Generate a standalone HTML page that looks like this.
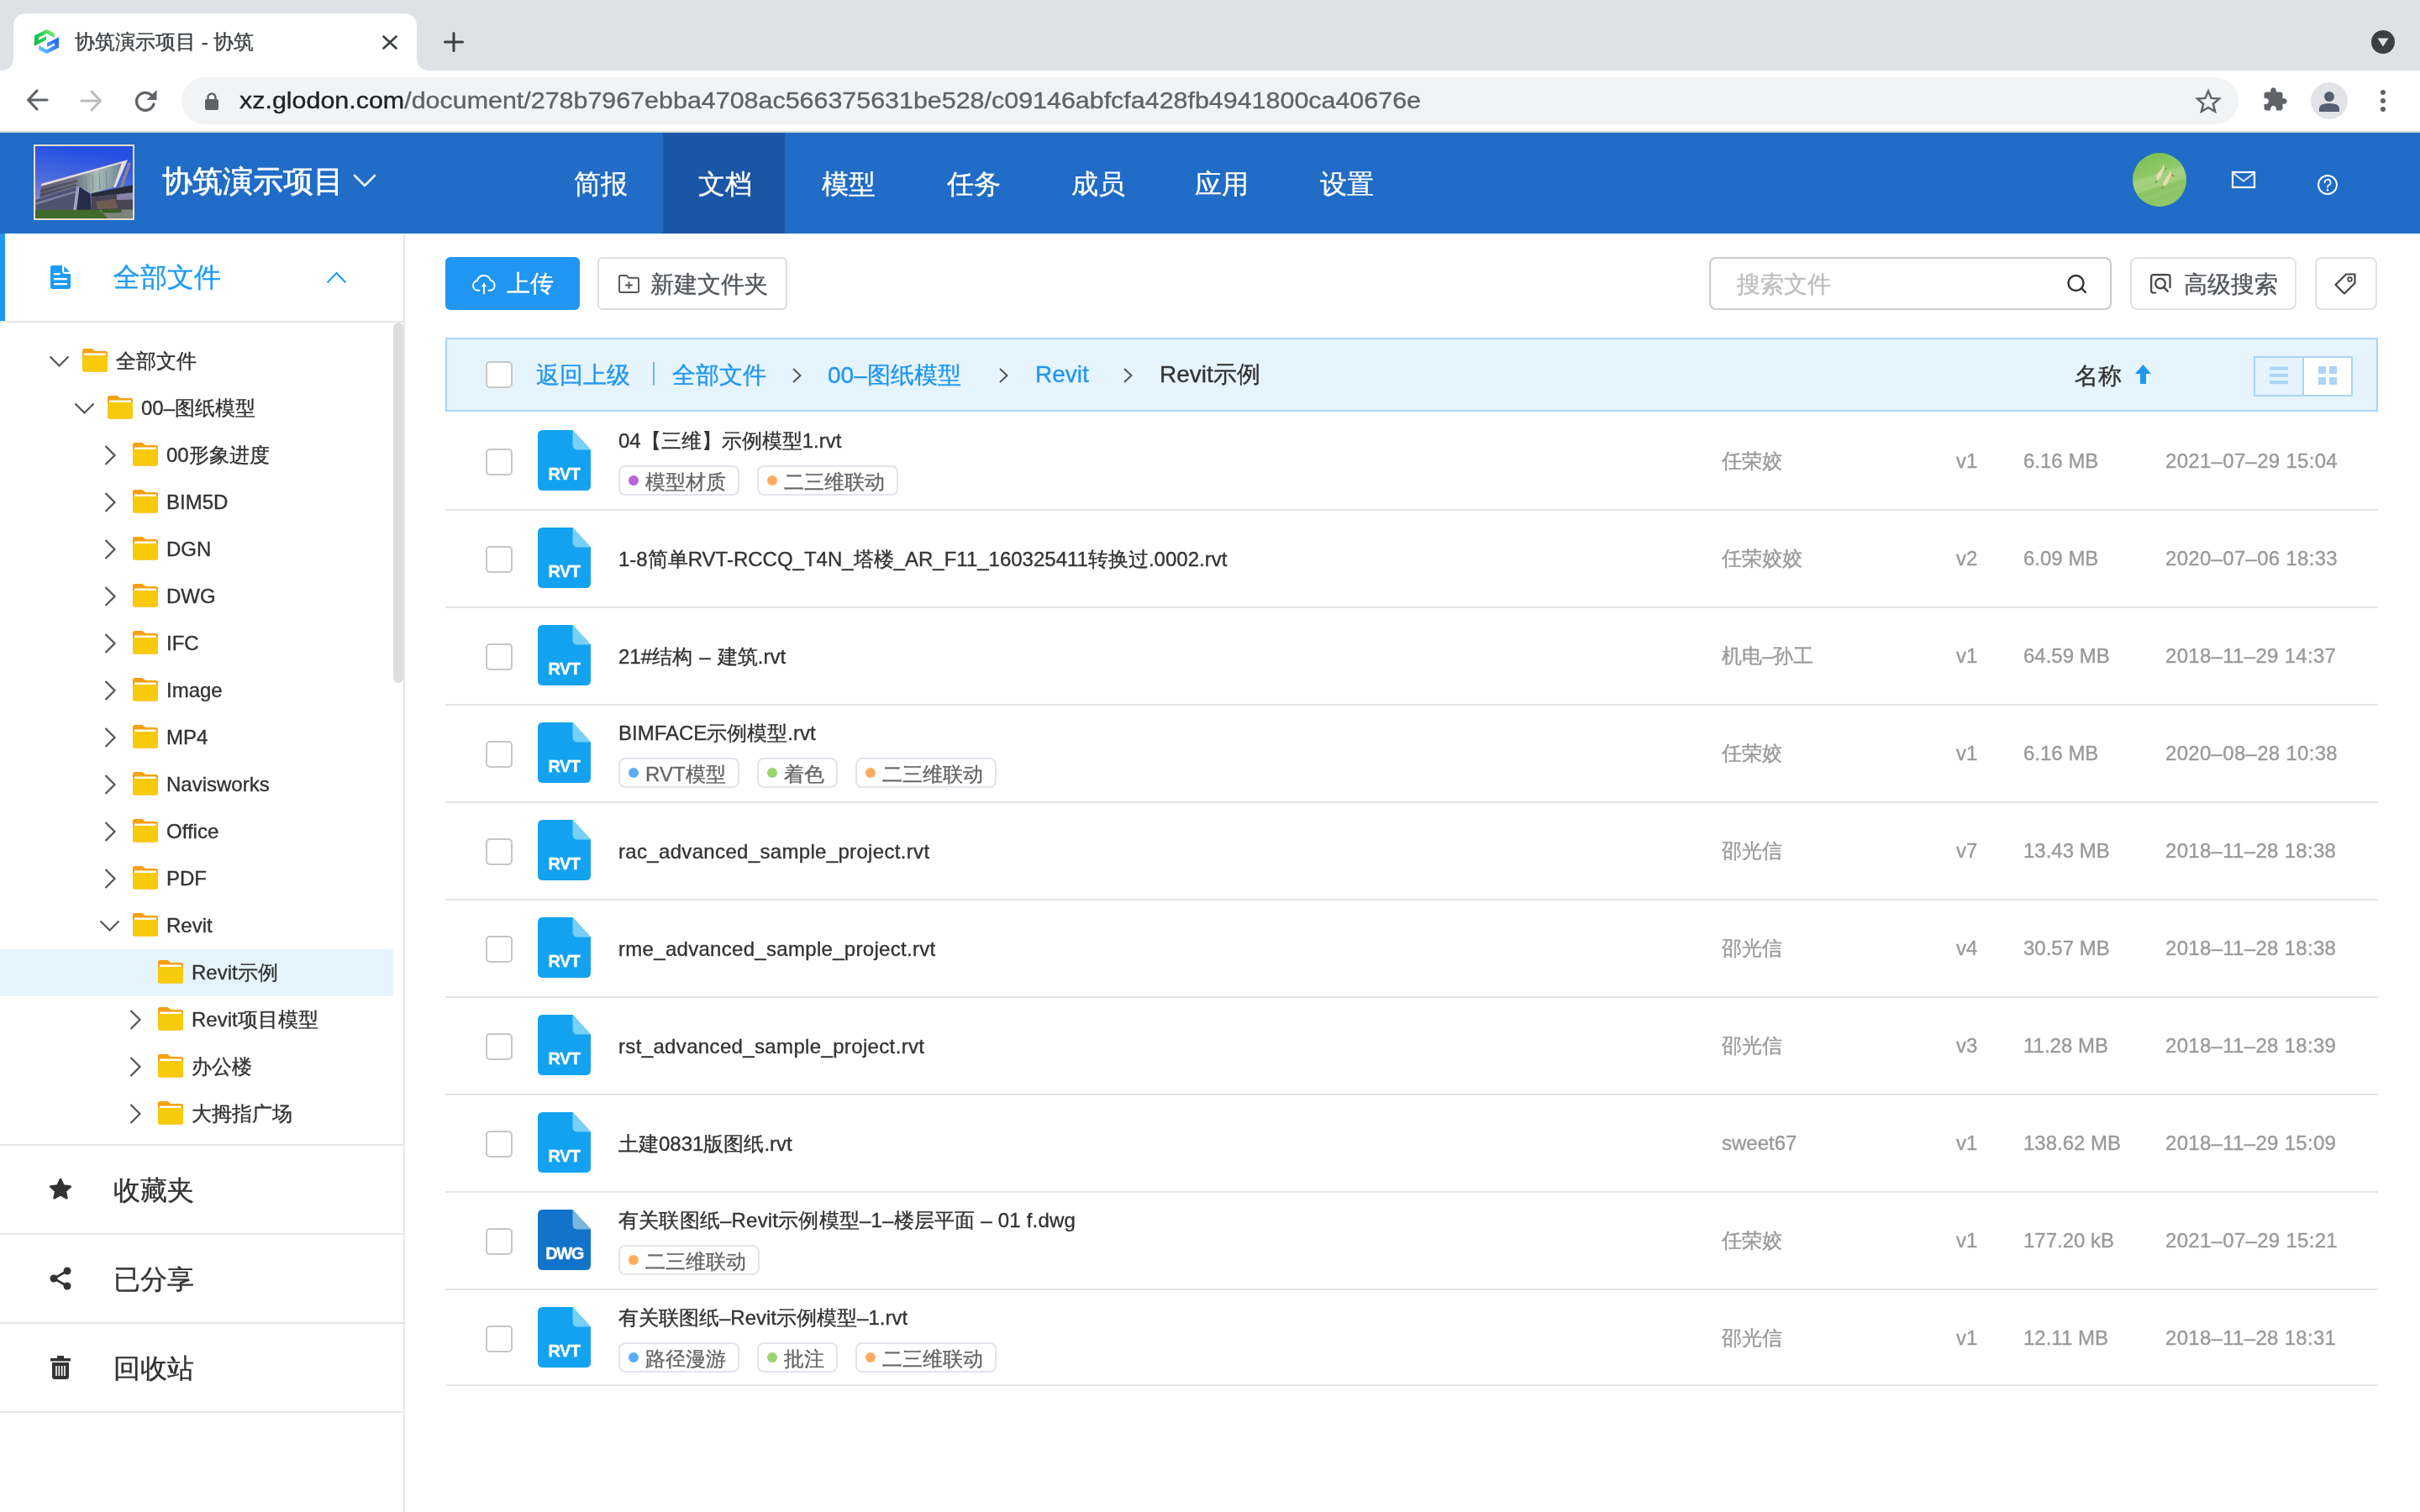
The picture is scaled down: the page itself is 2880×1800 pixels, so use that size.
<!DOCTYPE html>
<html><head><meta charset="utf-8"><style>
*{box-sizing:border-box;margin:0;padding:0}
html,body{width:2880px;height:1800px;overflow:hidden;background:#fff;font-family:"Liberation Sans",sans-serif}
.a{position:absolute}
.t{position:absolute;white-space:nowrap;line-height:1;-webkit-text-stroke:0.35px currentColor}
body{will-change:transform}
svg{position:absolute;overflow:visible}
</style></head><body>
<div class="a" style="left:0;top:0;width:2880px;height:84px;background:#dee1e6"></div>
<svg style="left:0;top:0" width="520" height="84"><path d="M0 84 Q16 84 16 68 L16 32 Q16 16 32 16 L480 16 Q496 16 496 32 L496 68 Q496 84 512 84 Z" fill="#fff"/></svg>
<svg style="left:36px;top:30px" width="40" height="40" viewBox="0 0 40 40">
<defs><linearGradient id="fg" x1="0" y1="1" x2="1" y2="0"><stop offset="0" stop-color="#10b43c"/><stop offset="0.55" stop-color="#22d35a"/><stop offset="1" stop-color="#9ef07a"/></linearGradient>
<linearGradient id="fb" x1="0" y1="1" x2="1" y2="0"><stop offset="0" stop-color="#86d4ff"/><stop offset="0.5" stop-color="#3a8cf7"/><stop offset="1" stop-color="#1d5bff"/></linearGradient></defs>
<path d="M5 24.8 L5 12.3 L19.5 5 L28.8 9.6 L28.8 14.8 L19.5 10.1 L10 14.8 L10 17.8 L19 13.3 L19 17.5 Z" fill="url(#fg)"/>
<path d="M34 14.2 L34 26.7 L19.5 34 L10.2 29.4 L10.2 24.2 L19.5 28.9 L29 24.2 L29 21.2 L20 25.7 L20 21.5 Z" fill="url(#fb)"/>
</svg>
<div class="t" style="left:89px;top:38px;font-size:24px;color:#3c4043;font-weight:400;">协筑演示项目 - 协筑</div>
<svg style="left:455px;top:42px" width="18" height="17"><path d="M1.5 1.5 L16.5 15.5 M16.5 1.5 L1.5 15.5" stroke="#3c4043" stroke-width="2.6" stroke-linecap="round"/></svg>
<svg style="left:528px;top:38px" width="24" height="24"><path d="M12 1.5 V22.5 M1.5 12 H22.5" stroke="#3c4043" stroke-width="3" stroke-linecap="round"/></svg>
<div class="a" style="left:2822px;top:36px;width:28px;height:28px;border-radius:14px;background:#3c4043"></div>
<svg style="left:2829px;top:45px" width="14" height="11"><path d="M0.5 0.5 L13.5 0.5 L7 10.5 Z" fill="#dee1e6"/></svg>
<div class="a" style="left:0;top:84px;width:2880px;height:72px;background:#fff"></div>
<div class="a" style="left:0;top:156px;width:2880px;height:2px;background:#d5d7da"></div>
<svg style="left:31px;top:106px" width="27" height="26"><path d="M25 13 H3 M13 2 L2.5 13 L13 24" stroke="#5f6368" stroke-width="3.2" fill="none" stroke-linecap="round" stroke-linejoin="round"/></svg>
<svg style="left:95px;top:107px" width="27" height="26"><path d="M2 13 H24 M14 2 L24.5 13 L14 24" stroke="#babcbe" stroke-width="3.2" fill="none" stroke-linecap="round" stroke-linejoin="round"/></svg>
<svg style="left:159px;top:107px" width="28" height="27"><path d="M24 17 A10.5 10.5 0 1 1 21 6" stroke="#5f6368" stroke-width="3.2" fill="none" stroke-linecap="round"/><path d="M27.5 0 V12 H15.5 Z" fill="#5f6368"/></svg>
<div class="a" style="left:216px;top:92px;width:2448px;height:56px;background:#f1f3f4;border-radius:28px"></div>
<svg style="left:244px;top:110px" width="16" height="21"><path d="M3.5 9 V6 A4.5 4.5 0 0 1 12.5 6 V9" stroke="#5f6368" stroke-width="2.4" fill="none"/><rect x="0" y="8" width="16" height="13" rx="2" fill="#5f6368"/></svg>
<div class="t" style="left:285px;top:106px;font-size:28px;color:#5f6368;font-weight:400;transform:scaleX(1.0867);transform-origin:0 0"><span style="color:#202124">xz.glodon.com</span>/document/278b7967ebba4708ac566375631be528/c09146abfcfa428fb4941800ca40676e</div>
<svg style="left:2613px;top:106px" width="30" height="29" viewBox="0 0 24 23"><path d="M12 1.8 L14.9 8.6 L22.3 9.2 L16.7 14.1 L18.4 21.3 L12 17.5 L5.6 21.3 L7.3 14.1 L1.7 9.2 L9.1 8.6 Z" stroke="#5f6368" stroke-width="2" fill="none" stroke-linejoin="miter"/></svg>
<svg style="left:2692px;top:103px" width="31" height="31" viewBox="0 0 24 24"><path d="M20.5 11H19V7c0-1.1-.9-2-2-2h-4V3.5C13 2.12 11.88 1 10.5 1S8 2.12 8 3.5V5H4c-1.1 0-1.99.9-1.99 2v3.8H3.5c1.49 0 2.7 1.21 2.7 2.7s-1.21 2.7-2.7 2.7H2V20c0 1.1.9 2 2 2h3.8v-1.5c0-1.49 1.21-2.7 2.7-2.7 1.49 0 2.7 1.21 2.7 2.7V22H17c1.1 0 2-.9 2-2v-4h1.5c1.38 0 2.5-1.12 2.5-2.5S21.88 11 20.5 11z" fill="#5f6368"/></svg>
<div class="a" style="left:2750px;top:98px;width:44px;height:44px;border-radius:22px;background:#e1e3e7"></div>
<svg style="left:2760px;top:108px" width="24" height="25"><circle cx="12" cy="7" r="6" fill="#54606f"/><path d="M0 25 V21 Q0 15 12 15 Q24 15 24 21 V25 Z" fill="#54606f"/></svg>
<div class="a" style="left:2833px;top:107px;width:6px;height:6px;border-radius:3px;background:#5f6368"></div>
<div class="a" style="left:2833px;top:117px;width:6px;height:6px;border-radius:3px;background:#5f6368"></div>
<div class="a" style="left:2833px;top:127px;width:6px;height:6px;border-radius:3px;background:#5f6368"></div>
<div class="a" style="left:0;top:158px;width:2880px;height:120px;background:#206cc6"></div>
<div class="a" style="left:789px;top:158px;width:145px;height:120px;background:#1b56a6"></div>
<div class="a" style="left:40px;top:172px;width:120px;height:90px;border:2px solid #e3ddd2;overflow:hidden;background:#2b52de">
<svg style="left:0;top:0" width="116" height="86" viewBox="0 0 116 86">
<defs><linearGradient id="sky" x1="0.2" y1="0" x2="0" y2="1"><stop offset="0" stop-color="#2650e2"/><stop offset="0.45" stop-color="#4c6cdc"/><stop offset="0.75" stop-color="#8a86cc"/><stop offset="1" stop-color="#9a8ec4"/></linearGradient>
<linearGradient id="glass" x1="0" y1="0" x2="1" y2="0"><stop offset="0" stop-color="#5e5a6e"/><stop offset="0.45" stop-color="#6f7a88"/><stop offset="0.7" stop-color="#a9bbb8"/><stop offset="0.85" stop-color="#8fa3a8"/><stop offset="1" stop-color="#6d8290"/></linearGradient></defs>
<rect width="116" height="86" fill="url(#sky)"/>
<path d="M110.4 19.8 L114 19.8 L104 50.5 L100 50.5 Z" fill="#8d8290"/>
<path d="M7.9 47 L102.5 20.5 L93.2 49 L65.4 56.8 L48.9 48.2 L5.2 62 Z" fill="url(#glass)"/>
<path d="M6 52 L50 40 L50 42.5 L6 55Z M5.5 57 L49 45 L49 47 L5.5 59.5Z" fill="#4a4658" opacity="0.8"/>
<path d="M60 36 L61 52 M68 34 L69 53 M76 31.5 L77 52 M84 29 L85 51" stroke="#5f6f7c" stroke-width="0.8" opacity="0.7"/>
<path d="M6.6 44.9 L110.1 16.2 L95.8 49 L93 49 L102.5 20.5 L7.9 47.6 Z" fill="#e6ddd8"/>
<path d="M0.6 64 L48.9 48.2 L45.6 76.7 L0.6 76 Z" fill="#4e5470"/>
<path d="M0.6 67 L48 53 L48 55.5 L0.6 70Z" fill="#8c92b4" opacity="0.7"/>
<path d="M52.2 48.2 L65.4 56.8 L66.8 76 L46.9 76.7 Z" fill="#262c48"/>
<path d="M49 48.2 L52.6 48.2 L49 76.7 L45.2 76.7 Z" fill="#a0a6c0"/>
<path d="M66.8 56.2 L116 46.2 L116 54.8 L66.8 60.8 Z" fill="#252b38"/>
<path d="M66.8 60.8 L116 54.8 L116 76 L66.8 76 Z" fill="#4b4656"/>
<path d="M97 57.5 L116 55.5 L116 63.5 L97 64 Z" fill="#9a90c0" opacity="0.8"/>
<path d="M72 66 L95 63 L98 74 L74 75 Z" fill="#8c7250" opacity="0.55"/>
<path d="M0 76 L116 75.5 L116 86 L0 86 Z" fill="#3f6a2c"/>
<path d="M76.7 76 L116 75.5 L116 86 L86 86 Z" fill="#7d847a"/>
<path d="M78.7 75.3 L102.5 75.3 L102.5 79.3 L80 79.3 Z" fill="#3a5a28"/>
</svg></div>
<div class="t" style="left:193px;top:198px;font-size:36px;color:#fff;font-weight:400;-webkit-text-stroke:0.7px #fff">协筑演示项目</div>
<svg style="left:420px;top:207px" width="28" height="16"><path d="M2 2 L14 14 L26 2" stroke="#eef4fb" stroke-width="2.6" fill="none" stroke-linecap="round" stroke-linejoin="round"/></svg>
<div class="t" style="left:683px;top:203px;font-size:32px;color:#fff;font-weight:400;">简报</div>
<div class="t" style="left:831px;top:203px;font-size:32px;color:#fff;font-weight:400;">文档</div>
<div class="t" style="left:978px;top:203px;font-size:32px;color:#fff;font-weight:400;">模型</div>
<div class="t" style="left:1127px;top:203px;font-size:32px;color:#fff;font-weight:400;">任务</div>
<div class="t" style="left:1275px;top:203px;font-size:32px;color:#fff;font-weight:400;">成员</div>
<div class="t" style="left:1422px;top:203px;font-size:32px;color:#fff;font-weight:400;">应用</div>
<div class="t" style="left:1571px;top:203px;font-size:32px;color:#fff;font-weight:400;">设置</div>
<div class="a" style="left:2538px;top:182px;width:64px;height:64px;border-radius:32px;overflow:hidden;background:linear-gradient(160deg,#78bb4e 0%,#8cc866 35%,#a3d07c 55%,#8cc466 75%,#9ccc74 100%)">
<svg style="left:0;top:0" width="64" height="64"><path d="M0 34 L64 14 L64 22 L0 44Z" fill="#a9d685" opacity=".5"/><path d="M0 50 L64 30 L64 36 L0 58Z" fill="#7fbf58" opacity=".5"/>
<path d="M28 27 L35 18 L37 13 L38 18 L33 30 L29 33 Z" fill="#e6ddb0"/><path d="M36 35 L43 25 L45 20 L46 26 L41 37 L37 40 Z" fill="#e6ddb0"/>
<path d="M29 33 L27 36 M37 40 L35 43 M38 18 L40 19 M46 26 L50 28" stroke="#8a7a4a" stroke-width="1.2"/></svg></div>
<svg style="left:2656px;top:204px" width="28" height="20"><rect x="1" y="1" width="26" height="18" fill="none" stroke="#fff" stroke-width="2.2"/><path d="M2 2.5 L14 11.5 L26 2.5" stroke="#dfe9f7" stroke-width="1.8" fill="none"/></svg>
<svg style="left:2758px;top:208px" width="24" height="24"><circle cx="12" cy="12" r="11" stroke="#fff" stroke-width="1.9" fill="none"/><path d="M8.6 9.3 A3.5 3.5 0 1 1 13 12.6 Q12 13.3 12 15" stroke="#fff" stroke-width="1.7" fill="none" stroke-linecap="round"/><circle cx="12" cy="18.2" r="1.2" fill="#fff"/></svg>
<div class="a" style="left:480px;top:278px;width:2px;height:1522px;background:#e6e7ec"></div>
<div class="a" style="left:0;top:278px;width:6px;height:105px;background:#2196f3"></div>
<div class="a" style="left:0;top:382px;width:481px;height:2px;background:#e6e6ea"></div>
<svg style="left:60px;top:316px" width="24" height="28" viewBox="0 0 24 28"><path d="M2.5 0 H14 V6.5 Q14 10 17.5 10 H24 V25.5 Q24 28 21.5 28 H2.5 Q0 28 0 25.5 V2.5 Q0 0 2.5 0 Z" fill="#1c9bfa"/><path d="M16.2 1 L23 7.8 H16.2 Z" fill="#1c9bfa"/><path d="M4 10.2 H11.7 M4 16.1 H19.9 M4 22.1 H19.9" stroke="#fff" stroke-width="2.2"/></svg>
<div class="t" style="left:135px;top:314px;font-size:32px;color:#1c9bfa;font-weight:400;">全部文件</div>
<svg style="left:388px;top:323px" width="25" height="15"><path d="M1.5 13.5 L12.5 2 L23.5 13.5" stroke="#1c9bfa" stroke-width="2" fill="none"/></svg>
<svg style="left:58px;top:423px" width="25" height="14"><path d="M1.5 1.5 L12.5 12.5 L23.5 1.5" stroke="#555" stroke-width="2.2" fill="none"/></svg>
<svg style="left:98px;top:415px" width="30" height="28" viewBox="0 0 30 28"><path d="M0 2.5 Q0 0 2.5 0 H11.5 L15 3 H27.5 Q30 3 30 5.5 V25 Q30 27.5 27.5 27.5 H2.5 Q0 27.5 0 25 Z" fill="#f6a00f"/><rect x="2" y="5.5" width="26" height="2.5" fill="#fff"/><path d="M0 8 H30 V25 Q30 27.5 27.5 27.5 H2.5 Q0 27.5 0 25 Z" fill="#f8ca0c"/></svg>
<div class="t" style="left:138px;top:418px;font-size:24px;color:#333;font-weight:400;">全部文件</div>
<svg style="left:88px;top:479px" width="25" height="14"><path d="M1.5 1.5 L12.5 12.5 L23.5 1.5" stroke="#555" stroke-width="2.2" fill="none"/></svg>
<svg style="left:128px;top:471px" width="30" height="28" viewBox="0 0 30 28"><path d="M0 2.5 Q0 0 2.5 0 H11.5 L15 3 H27.5 Q30 3 30 5.5 V25 Q30 27.5 27.5 27.5 H2.5 Q0 27.5 0 25 Z" fill="#f6a00f"/><rect x="2" y="5.5" width="26" height="2.5" fill="#fff"/><path d="M0 8 H30 V25 Q30 27.5 27.5 27.5 H2.5 Q0 27.5 0 25 Z" fill="#f8ca0c"/></svg>
<div class="t" style="left:168px;top:474px;font-size:24px;color:#333;font-weight:400;">00–图纸模型</div>
<svg style="left:124px;top:530px" width="14" height="24"><path d="M1.5 1 L12.5 12 L1.5 23" stroke="#555" stroke-width="2.2" fill="none"/></svg>
<svg style="left:158px;top:527px" width="30" height="28" viewBox="0 0 30 28"><path d="M0 2.5 Q0 0 2.5 0 H11.5 L15 3 H27.5 Q30 3 30 5.5 V25 Q30 27.5 27.5 27.5 H2.5 Q0 27.5 0 25 Z" fill="#f6a00f"/><rect x="2" y="5.5" width="26" height="2.5" fill="#fff"/><path d="M0 8 H30 V25 Q30 27.5 27.5 27.5 H2.5 Q0 27.5 0 25 Z" fill="#f8ca0c"/></svg>
<div class="t" style="left:198px;top:530px;font-size:24px;color:#333;font-weight:400;">00形象进度</div>
<svg style="left:124px;top:586px" width="14" height="24"><path d="M1.5 1 L12.5 12 L1.5 23" stroke="#555" stroke-width="2.2" fill="none"/></svg>
<svg style="left:158px;top:583px" width="30" height="28" viewBox="0 0 30 28"><path d="M0 2.5 Q0 0 2.5 0 H11.5 L15 3 H27.5 Q30 3 30 5.5 V25 Q30 27.5 27.5 27.5 H2.5 Q0 27.5 0 25 Z" fill="#f6a00f"/><rect x="2" y="5.5" width="26" height="2.5" fill="#fff"/><path d="M0 8 H30 V25 Q30 27.5 27.5 27.5 H2.5 Q0 27.5 0 25 Z" fill="#f8ca0c"/></svg>
<div class="t" style="left:198px;top:586px;font-size:24px;color:#333;font-weight:400;">BIM5D</div>
<svg style="left:124px;top:642px" width="14" height="24"><path d="M1.5 1 L12.5 12 L1.5 23" stroke="#555" stroke-width="2.2" fill="none"/></svg>
<svg style="left:158px;top:639px" width="30" height="28" viewBox="0 0 30 28"><path d="M0 2.5 Q0 0 2.5 0 H11.5 L15 3 H27.5 Q30 3 30 5.5 V25 Q30 27.5 27.5 27.5 H2.5 Q0 27.5 0 25 Z" fill="#f6a00f"/><rect x="2" y="5.5" width="26" height="2.5" fill="#fff"/><path d="M0 8 H30 V25 Q30 27.5 27.5 27.5 H2.5 Q0 27.5 0 25 Z" fill="#f8ca0c"/></svg>
<div class="t" style="left:198px;top:642px;font-size:24px;color:#333;font-weight:400;">DGN</div>
<svg style="left:124px;top:698px" width="14" height="24"><path d="M1.5 1 L12.5 12 L1.5 23" stroke="#555" stroke-width="2.2" fill="none"/></svg>
<svg style="left:158px;top:695px" width="30" height="28" viewBox="0 0 30 28"><path d="M0 2.5 Q0 0 2.5 0 H11.5 L15 3 H27.5 Q30 3 30 5.5 V25 Q30 27.5 27.5 27.5 H2.5 Q0 27.5 0 25 Z" fill="#f6a00f"/><rect x="2" y="5.5" width="26" height="2.5" fill="#fff"/><path d="M0 8 H30 V25 Q30 27.5 27.5 27.5 H2.5 Q0 27.5 0 25 Z" fill="#f8ca0c"/></svg>
<div class="t" style="left:198px;top:698px;font-size:24px;color:#333;font-weight:400;">DWG</div>
<svg style="left:124px;top:754px" width="14" height="24"><path d="M1.5 1 L12.5 12 L1.5 23" stroke="#555" stroke-width="2.2" fill="none"/></svg>
<svg style="left:158px;top:751px" width="30" height="28" viewBox="0 0 30 28"><path d="M0 2.5 Q0 0 2.5 0 H11.5 L15 3 H27.5 Q30 3 30 5.5 V25 Q30 27.5 27.5 27.5 H2.5 Q0 27.5 0 25 Z" fill="#f6a00f"/><rect x="2" y="5.5" width="26" height="2.5" fill="#fff"/><path d="M0 8 H30 V25 Q30 27.5 27.5 27.5 H2.5 Q0 27.5 0 25 Z" fill="#f8ca0c"/></svg>
<div class="t" style="left:198px;top:754px;font-size:24px;color:#333;font-weight:400;">IFC</div>
<svg style="left:124px;top:810px" width="14" height="24"><path d="M1.5 1 L12.5 12 L1.5 23" stroke="#555" stroke-width="2.2" fill="none"/></svg>
<svg style="left:158px;top:807px" width="30" height="28" viewBox="0 0 30 28"><path d="M0 2.5 Q0 0 2.5 0 H11.5 L15 3 H27.5 Q30 3 30 5.5 V25 Q30 27.5 27.5 27.5 H2.5 Q0 27.5 0 25 Z" fill="#f6a00f"/><rect x="2" y="5.5" width="26" height="2.5" fill="#fff"/><path d="M0 8 H30 V25 Q30 27.5 27.5 27.5 H2.5 Q0 27.5 0 25 Z" fill="#f8ca0c"/></svg>
<div class="t" style="left:198px;top:810px;font-size:24px;color:#333;font-weight:400;">Image</div>
<svg style="left:124px;top:866px" width="14" height="24"><path d="M1.5 1 L12.5 12 L1.5 23" stroke="#555" stroke-width="2.2" fill="none"/></svg>
<svg style="left:158px;top:863px" width="30" height="28" viewBox="0 0 30 28"><path d="M0 2.5 Q0 0 2.5 0 H11.5 L15 3 H27.5 Q30 3 30 5.5 V25 Q30 27.5 27.5 27.5 H2.5 Q0 27.5 0 25 Z" fill="#f6a00f"/><rect x="2" y="5.5" width="26" height="2.5" fill="#fff"/><path d="M0 8 H30 V25 Q30 27.5 27.5 27.5 H2.5 Q0 27.5 0 25 Z" fill="#f8ca0c"/></svg>
<div class="t" style="left:198px;top:866px;font-size:24px;color:#333;font-weight:400;">MP4</div>
<svg style="left:124px;top:922px" width="14" height="24"><path d="M1.5 1 L12.5 12 L1.5 23" stroke="#555" stroke-width="2.2" fill="none"/></svg>
<svg style="left:158px;top:919px" width="30" height="28" viewBox="0 0 30 28"><path d="M0 2.5 Q0 0 2.5 0 H11.5 L15 3 H27.5 Q30 3 30 5.5 V25 Q30 27.5 27.5 27.5 H2.5 Q0 27.5 0 25 Z" fill="#f6a00f"/><rect x="2" y="5.5" width="26" height="2.5" fill="#fff"/><path d="M0 8 H30 V25 Q30 27.5 27.5 27.5 H2.5 Q0 27.5 0 25 Z" fill="#f8ca0c"/></svg>
<div class="t" style="left:198px;top:922px;font-size:24px;color:#333;font-weight:400;">Navisworks</div>
<svg style="left:124px;top:978px" width="14" height="24"><path d="M1.5 1 L12.5 12 L1.5 23" stroke="#555" stroke-width="2.2" fill="none"/></svg>
<svg style="left:158px;top:975px" width="30" height="28" viewBox="0 0 30 28"><path d="M0 2.5 Q0 0 2.5 0 H11.5 L15 3 H27.5 Q30 3 30 5.5 V25 Q30 27.5 27.5 27.5 H2.5 Q0 27.5 0 25 Z" fill="#f6a00f"/><rect x="2" y="5.5" width="26" height="2.5" fill="#fff"/><path d="M0 8 H30 V25 Q30 27.5 27.5 27.5 H2.5 Q0 27.5 0 25 Z" fill="#f8ca0c"/></svg>
<div class="t" style="left:198px;top:978px;font-size:24px;color:#333;font-weight:400;">Office</div>
<svg style="left:124px;top:1034px" width="14" height="24"><path d="M1.5 1 L12.5 12 L1.5 23" stroke="#555" stroke-width="2.2" fill="none"/></svg>
<svg style="left:158px;top:1031px" width="30" height="28" viewBox="0 0 30 28"><path d="M0 2.5 Q0 0 2.5 0 H11.5 L15 3 H27.5 Q30 3 30 5.5 V25 Q30 27.5 27.5 27.5 H2.5 Q0 27.5 0 25 Z" fill="#f6a00f"/><rect x="2" y="5.5" width="26" height="2.5" fill="#fff"/><path d="M0 8 H30 V25 Q30 27.5 27.5 27.5 H2.5 Q0 27.5 0 25 Z" fill="#f8ca0c"/></svg>
<div class="t" style="left:198px;top:1034px;font-size:24px;color:#333;font-weight:400;">PDF</div>
<svg style="left:118px;top:1095px" width="25" height="14"><path d="M1.5 1.5 L12.5 12.5 L23.5 1.5" stroke="#555" stroke-width="2.2" fill="none"/></svg>
<svg style="left:158px;top:1087px" width="30" height="28" viewBox="0 0 30 28"><path d="M0 2.5 Q0 0 2.5 0 H11.5 L15 3 H27.5 Q30 3 30 5.5 V25 Q30 27.5 27.5 27.5 H2.5 Q0 27.5 0 25 Z" fill="#f6a00f"/><rect x="2" y="5.5" width="26" height="2.5" fill="#fff"/><path d="M0 8 H30 V25 Q30 27.5 27.5 27.5 H2.5 Q0 27.5 0 25 Z" fill="#f8ca0c"/></svg>
<div class="t" style="left:198px;top:1090px;font-size:24px;color:#333;font-weight:400;">Revit</div>
<div class="a" style="left:0;top:1130px;width:468px;height:56px;background:#e6f4fe"></div>
<svg style="left:188px;top:1143px" width="30" height="28" viewBox="0 0 30 28"><path d="M0 2.5 Q0 0 2.5 0 H11.5 L15 3 H27.5 Q30 3 30 5.5 V25 Q30 27.5 27.5 27.5 H2.5 Q0 27.5 0 25 Z" fill="#f6a00f"/><rect x="2" y="5.5" width="26" height="2.5" fill="#fff"/><path d="M0 8 H30 V25 Q30 27.5 27.5 27.5 H2.5 Q0 27.5 0 25 Z" fill="#f8ca0c"/></svg>
<div class="t" style="left:228px;top:1146px;font-size:24px;color:#333;font-weight:400;">Revit示例</div>
<svg style="left:154px;top:1202px" width="14" height="24"><path d="M1.5 1 L12.5 12 L1.5 23" stroke="#555" stroke-width="2.2" fill="none"/></svg>
<svg style="left:188px;top:1199px" width="30" height="28" viewBox="0 0 30 28"><path d="M0 2.5 Q0 0 2.5 0 H11.5 L15 3 H27.5 Q30 3 30 5.5 V25 Q30 27.5 27.5 27.5 H2.5 Q0 27.5 0 25 Z" fill="#f6a00f"/><rect x="2" y="5.5" width="26" height="2.5" fill="#fff"/><path d="M0 8 H30 V25 Q30 27.5 27.5 27.5 H2.5 Q0 27.5 0 25 Z" fill="#f8ca0c"/></svg>
<div class="t" style="left:228px;top:1202px;font-size:24px;color:#333;font-weight:400;">Revit项目模型</div>
<svg style="left:154px;top:1258px" width="14" height="24"><path d="M1.5 1 L12.5 12 L1.5 23" stroke="#555" stroke-width="2.2" fill="none"/></svg>
<svg style="left:188px;top:1255px" width="30" height="28" viewBox="0 0 30 28"><path d="M0 2.5 Q0 0 2.5 0 H11.5 L15 3 H27.5 Q30 3 30 5.5 V25 Q30 27.5 27.5 27.5 H2.5 Q0 27.5 0 25 Z" fill="#f6a00f"/><rect x="2" y="5.5" width="26" height="2.5" fill="#fff"/><path d="M0 8 H30 V25 Q30 27.5 27.5 27.5 H2.5 Q0 27.5 0 25 Z" fill="#f8ca0c"/></svg>
<div class="t" style="left:228px;top:1258px;font-size:24px;color:#333;font-weight:400;">办公楼</div>
<svg style="left:154px;top:1314px" width="14" height="24"><path d="M1.5 1 L12.5 12 L1.5 23" stroke="#555" stroke-width="2.2" fill="none"/></svg>
<svg style="left:188px;top:1311px" width="30" height="28" viewBox="0 0 30 28"><path d="M0 2.5 Q0 0 2.5 0 H11.5 L15 3 H27.5 Q30 3 30 5.5 V25 Q30 27.5 27.5 27.5 H2.5 Q0 27.5 0 25 Z" fill="#f6a00f"/><rect x="2" y="5.5" width="26" height="2.5" fill="#fff"/><path d="M0 8 H30 V25 Q30 27.5 27.5 27.5 H2.5 Q0 27.5 0 25 Z" fill="#f8ca0c"/></svg>
<div class="t" style="left:228px;top:1314px;font-size:24px;color:#333;font-weight:400;">大拇指广场</div>
<div class="a" style="left:468px;top:384px;width:12px;height:429px;border-radius:6px;background:#dedede"></div>
<div class="a" style="left:0;top:1362px;width:481px;height:2px;background:#e6e6ea"></div>
<div class="t" style="left:135px;top:1401px;font-size:32px;color:#333;font-weight:400;">收藏夹</div>
<div class="a" style="left:0;top:1468px;width:481px;height:2px;background:#e6e6ea"></div>
<div class="t" style="left:135px;top:1507px;font-size:32px;color:#333;font-weight:400;">已分享</div>
<div class="a" style="left:0;top:1574px;width:481px;height:2px;background:#e6e6ea"></div>
<div class="t" style="left:135px;top:1613px;font-size:32px;color:#333;font-weight:400;">回收站</div>
<div class="a" style="left:0;top:1680px;width:481px;height:2px;background:#e6e6ea"></div>
<svg style="left:58px;top:1402px" width="28" height="27" viewBox="0 0 28 27"><path d="M14 2 L17.6 9.6 L25.8 10.5 L19.7 16.1 L21.4 24.3 L14 20.1 L6.6 24.3 L8.3 16.1 L2.2 10.5 L10.4 9.6 Z" fill="#333" stroke="#333" stroke-width="2.6" stroke-linejoin="round"/></svg>
<svg style="left:58px;top:1508px" width="28" height="28" viewBox="0 0 28 28"><circle cx="22" cy="5" r="4.5" fill="#333"/><circle cx="6" cy="14" r="4.5" fill="#333"/><circle cx="22" cy="23" r="4.5" fill="#333"/><path d="M22 5 L6 14 L22 23" stroke="#333" stroke-width="2.6" fill="none"/></svg>
<svg style="left:60px;top:1614px" width="24" height="28" viewBox="0 0 24 28"><path d="M8 0 H16 V3 H24 V6.5 H0 V3 H8 Z" fill="#333"/><path d="M2 8 H22 V25 Q22 28 19 28 H5 Q2 28 2 25 Z" fill="#333"/><path d="M7 12 V24 M10.3 12 V24 M13.7 12 V24 M17 12 V24" stroke="#fff" stroke-width="1.6"/></svg>
<div class="a" style="left:530px;top:306px;width:160px;height:63px;border-radius:6px;background:#2196f3"></div>
<svg style="left:561px;top:325px" width="30" height="26" viewBox="0 0 30 26"><path d="M9.5 20.8 H7.5 A5.8 5.8 0 0 1 6.8 9.3 A8.3 8.3 0 0 1 22.7 8.6 A6.3 6.3 0 0 1 23 20.8 H20.5" stroke="#fff" stroke-width="1.9" fill="none" stroke-linecap="round"/><path d="M15 24.5 V12.8" stroke="#fff" stroke-width="1.9" stroke-linecap="round"/><path d="M11.8 16.2 L15 12.2 L18.2 16.2 Z" fill="#fff"/></svg>
<div class="t" style="left:603px;top:324px;font-size:28px;color:#fff;font-weight:400;">上传</div>
<div class="a" style="left:711px;top:306px;width:226px;height:63px;border-radius:6px;border:2px solid #dcdde3;background:#fff"></div>
<svg style="left:736px;top:327px" width="25" height="22" viewBox="0 0 25 22"><path d="M1 2.8 Q1 1 2.8 1 H9.6 L12.3 3.8 H22.2 Q24 3.8 24 5.6 V19.2 Q24 21 22.2 21 H2.8 Q1 21 1 19.2 Z" stroke="#555" stroke-width="1.9" fill="none"/><path d="M12.5 8.2 V16.8 M8.2 12.5 H16.8" stroke="#555" stroke-width="1.9"/></svg>
<div class="t" style="left:774px;top:325px;font-size:28px;color:#53575d;font-weight:400;">新建文件夹</div>
<div class="a" style="left:2034px;top:306px;width:479px;height:63px;border-radius:8px;border:2px solid #cbcbcb;background:#fff"></div>
<div class="t" style="left:2067px;top:325px;font-size:28px;color:#bdbdbd;font-weight:400;">搜索文件</div>
<svg style="left:2460px;top:327px" width="24" height="22" viewBox="0 0 24 22"><circle cx="10.5" cy="10" r="9" stroke="#333" stroke-width="2.4" fill="none"/><path d="M17.5 16.5 L22 21" stroke="#333" stroke-width="2.4" stroke-linecap="round"/></svg>
<div class="a" style="left:2535px;top:306px;width:198px;height:63px;border-radius:8px;border:2px solid #dfe1ea;background:#fff"></div>
<svg style="left:2559px;top:326px" width="25" height="24" viewBox="0 0 25 24"><path d="M7 22.5 H3.5 Q1.2 22.5 1.2 20.2 V3.5 Q1.2 1.2 3.5 1.2 H21 Q23.5 1.2 23.5 3.5 V17" stroke="#444" stroke-width="2.2" fill="none"/><circle cx="12" cy="11.5" r="5.8" stroke="#444" stroke-width="2.2" fill="none"/><path d="M16 15.8 L21.5 21.5" stroke="#444" stroke-width="2.4"/></svg>
<div class="t" style="left:2599px;top:325px;font-size:28px;color:#53575d;font-weight:400;">高级搜索</div>
<div class="a" style="left:2755px;top:306px;width:74px;height:63px;border-radius:8px;border:2px solid #dfe1ea;background:#fff"></div>
<svg style="left:2778px;top:325px" width="26" height="26" viewBox="0 0 26 26"><path d="M14 1.5 H24.5 V12 L12 24.5 L1.5 14 Z" stroke="#444" stroke-width="2.2" fill="none" stroke-linejoin="round"/><circle cx="18.5" cy="7.5" r="2.4" stroke="#444" stroke-width="1.8" fill="none"/></svg>
<div class="a" style="left:530px;top:402px;width:2300px;height:88px;border:2px solid #a8d4fb;background:#e6f4fe"></div>
<div class="a" style="left:578px;top:430px;width:32px;height:32px;border:2px solid #c6c6c6;border-radius:5px;background:#fff"></div>
<div class="t" style="left:638px;top:433px;font-size:28px;color:#2196f3;font-weight:400;">返回上级</div>
<div class="a" style="left:777px;top:431px;width:2px;height:28px;background:#6ab8f5"></div>
<div class="t" style="left:800px;top:433px;font-size:28px;color:#2196f3;font-weight:400;">全部文件</div>
<svg style="left:943px;top:438px" width="11" height="18"><path d="M1 1 L9.5 9 L1 17" stroke="#555" stroke-width="2" fill="none"/></svg>
<div class="t" style="left:985px;top:433px;font-size:28px;color:#2196f3;font-weight:400;">00–图纸模型</div>
<svg style="left:1189px;top:438px" width="11" height="18"><path d="M1 1 L9.5 9 L1 17" stroke="#555" stroke-width="2" fill="none"/></svg>
<div class="t" style="left:1232px;top:432px;font-size:28px;color:#2196f3;font-weight:400;">Revit</div>
<svg style="left:1337px;top:438px" width="11" height="18"><path d="M1 1 L9.5 9 L1 17" stroke="#555" stroke-width="2" fill="none"/></svg>
<div class="t" style="left:1380px;top:432px;font-size:28px;color:#333;font-weight:400;">Revit示例</div>
<div class="t" style="left:2469px;top:434px;font-size:28px;color:#333;font-weight:400;">名称</div>
<svg style="left:2541px;top:434px" width="19" height="23" viewBox="0 0 19 23"><path d="M9.5 0 L19 11 H13 V23 H6 V11 H0 Z" fill="#2196f3"/></svg>
<div class="a" style="left:2682px;top:424px;width:118px;height:48px;border:2px solid #a8d4fb;background:#e6f4fe"></div>
<div class="a" style="left:2740px;top:424px;width:60px;height:48px;border:2px solid #a8d4fb;background:#fff"></div>
<svg style="left:2701px;top:436px" width="22" height="22"><path d="M0 2.5 H22 M0 10.8 H22 M0 19.2 H22" stroke="#acd4fa" stroke-width="4"/></svg>
<svg style="left:2759px;top:436px" width="22" height="22"><rect x="0" y="0" width="9" height="9" fill="#acd4fa"/><rect x="13" y="0" width="9" height="9" fill="#acd4fa"/><rect x="0" y="13" width="9" height="9" fill="#acd4fa"/><rect x="13" y="13" width="9" height="9" fill="#acd4fa"/></svg>
<div class="a" style="left:578px;top:534px;width:32px;height:32px;border:2px solid #c6c6c6;border-radius:5px;background:#fff"></div>
<svg style="left:640px;top:512px" width="63" height="72" viewBox="0 0 63 72"><path d="M6 0 H41.5 L63 23.5 V66 Q63 72 57 72 H6 Q0 72 0 66 V6 Q0 0 6 0 Z" fill="#12a2f0"/><path d="M41.5 0 L63 23.5 H47.5 Q41.5 23.5 41.5 17.5 Z" fill="#76d0f7"/></svg>
<div class="t" style="left:640px;top:554px;width:63px;text-align:center;font-size:20px;font-weight:700;color:#fff;letter-spacing:-0.6px">RVT</div>
<div class="t" style="left:736px;top:513px;font-size:24px;color:#333;font-weight:400;">04【三维】示例模型1.rvt</div>
<div class="a" style="left:736px;top:554px;display:flex;gap:21px"><div style="position:relative;height:36px;padding:0 14px 0 30px;border:2px solid #e1e4ec;border-radius:8px;background:#fff;font-size:24px;line-height:36px;color:#666;white-space:nowrap;-webkit-text-stroke:0.35px currentColor"><span style="position:absolute;left:10px;top:10px;width:12px;height:12px;border-radius:6px;background:#b865d6"></span>模型材质</div><div style="position:relative;height:36px;padding:0 14px 0 30px;border:2px solid #e1e4ec;border-radius:8px;background:#fff;font-size:24px;line-height:36px;color:#666;white-space:nowrap;-webkit-text-stroke:0.35px currentColor"><span style="position:absolute;left:10px;top:10px;width:12px;height:12px;border-radius:6px;background:#fdab5f"></span>二三维联动</div></div>
<div class="t" style="left:2049px;top:537px;font-size:24px;color:#999;font-weight:400;">任荣姣</div>
<div class="t" style="left:2328px;top:537px;font-size:24px;color:#999;font-weight:400;">v1</div>
<div class="t" style="left:2408px;top:537px;font-size:24px;color:#999;font-weight:400;">6.16 MB</div>
<div class="t" style="left:2577px;top:537px;font-size:24px;color:#999;font-weight:400;letter-spacing:0.3px">2021–07–29 15:04</div>
<div class="a" style="left:530px;top:606px;width:2300px;height:2px;background:#e3e5ea"></div>
<div class="a" style="left:578px;top:650px;width:32px;height:32px;border:2px solid #c6c6c6;border-radius:5px;background:#fff"></div>
<svg style="left:640px;top:628px" width="63" height="72" viewBox="0 0 63 72"><path d="M6 0 H41.5 L63 23.5 V66 Q63 72 57 72 H6 Q0 72 0 66 V6 Q0 0 6 0 Z" fill="#12a2f0"/><path d="M41.5 0 L63 23.5 H47.5 Q41.5 23.5 41.5 17.5 Z" fill="#76d0f7"/></svg>
<div class="t" style="left:640px;top:670px;width:63px;text-align:center;font-size:20px;font-weight:700;color:#fff;letter-spacing:-0.6px">RVT</div>
<div class="t" style="left:736px;top:654px;font-size:24px;color:#333;font-weight:400;">1-8简单RVT-RCCQ_T4N_塔楼_AR_F11_160325411转换过.0002.rvt</div>
<div class="t" style="left:2049px;top:653px;font-size:24px;color:#999;font-weight:400;">任荣姣姣</div>
<div class="t" style="left:2328px;top:653px;font-size:24px;color:#999;font-weight:400;">v2</div>
<div class="t" style="left:2408px;top:653px;font-size:24px;color:#999;font-weight:400;">6.09 MB</div>
<div class="t" style="left:2577px;top:653px;font-size:24px;color:#999;font-weight:400;letter-spacing:0.3px">2020–07–06 18:33</div>
<div class="a" style="left:530px;top:722px;width:2300px;height:2px;background:#e3e5ea"></div>
<div class="a" style="left:578px;top:766px;width:32px;height:32px;border:2px solid #c6c6c6;border-radius:5px;background:#fff"></div>
<svg style="left:640px;top:744px" width="63" height="72" viewBox="0 0 63 72"><path d="M6 0 H41.5 L63 23.5 V66 Q63 72 57 72 H6 Q0 72 0 66 V6 Q0 0 6 0 Z" fill="#12a2f0"/><path d="M41.5 0 L63 23.5 H47.5 Q41.5 23.5 41.5 17.5 Z" fill="#76d0f7"/></svg>
<div class="t" style="left:640px;top:786px;width:63px;text-align:center;font-size:20px;font-weight:700;color:#fff;letter-spacing:-0.6px">RVT</div>
<div class="t" style="left:736px;top:770px;font-size:24px;color:#333;font-weight:400;word-spacing:1.5px">21#结构 – 建筑.rvt</div>
<div class="t" style="left:2049px;top:769px;font-size:24px;color:#999;font-weight:400;">机电–孙工</div>
<div class="t" style="left:2328px;top:769px;font-size:24px;color:#999;font-weight:400;">v1</div>
<div class="t" style="left:2408px;top:769px;font-size:24px;color:#999;font-weight:400;">64.59 MB</div>
<div class="t" style="left:2577px;top:769px;font-size:24px;color:#999;font-weight:400;letter-spacing:0.3px">2018–11–29 14:37</div>
<div class="a" style="left:530px;top:838px;width:2300px;height:2px;background:#e3e5ea"></div>
<div class="a" style="left:578px;top:882px;width:32px;height:32px;border:2px solid #c6c6c6;border-radius:5px;background:#fff"></div>
<svg style="left:640px;top:860px" width="63" height="72" viewBox="0 0 63 72"><path d="M6 0 H41.5 L63 23.5 V66 Q63 72 57 72 H6 Q0 72 0 66 V6 Q0 0 6 0 Z" fill="#12a2f0"/><path d="M41.5 0 L63 23.5 H47.5 Q41.5 23.5 41.5 17.5 Z" fill="#76d0f7"/></svg>
<div class="t" style="left:640px;top:902px;width:63px;text-align:center;font-size:20px;font-weight:700;color:#fff;letter-spacing:-0.6px">RVT</div>
<div class="t" style="left:736px;top:861px;font-size:24px;color:#333;font-weight:400;">BIMFACE示例模型.rvt</div>
<div class="a" style="left:736px;top:902px;display:flex;gap:21px"><div style="position:relative;height:36px;padding:0 14px 0 30px;border:2px solid #e1e4ec;border-radius:8px;background:#fff;font-size:24px;line-height:36px;color:#666;white-space:nowrap;-webkit-text-stroke:0.35px currentColor"><span style="position:absolute;left:10px;top:10px;width:12px;height:12px;border-radius:6px;background:#5aaef5"></span>RVT模型</div><div style="position:relative;height:36px;padding:0 14px 0 30px;border:2px solid #e1e4ec;border-radius:8px;background:#fff;font-size:24px;line-height:36px;color:#666;white-space:nowrap;-webkit-text-stroke:0.35px currentColor"><span style="position:absolute;left:10px;top:10px;width:12px;height:12px;border-radius:6px;background:#9bd273"></span>着色</div><div style="position:relative;height:36px;padding:0 14px 0 30px;border:2px solid #e1e4ec;border-radius:8px;background:#fff;font-size:24px;line-height:36px;color:#666;white-space:nowrap;-webkit-text-stroke:0.35px currentColor"><span style="position:absolute;left:10px;top:10px;width:12px;height:12px;border-radius:6px;background:#fdab5f"></span>二三维联动</div></div>
<div class="t" style="left:2049px;top:885px;font-size:24px;color:#999;font-weight:400;">任荣姣</div>
<div class="t" style="left:2328px;top:885px;font-size:24px;color:#999;font-weight:400;">v1</div>
<div class="t" style="left:2408px;top:885px;font-size:24px;color:#999;font-weight:400;">6.16 MB</div>
<div class="t" style="left:2577px;top:885px;font-size:24px;color:#999;font-weight:400;letter-spacing:0.3px">2020–08–28 10:38</div>
<div class="a" style="left:530px;top:954px;width:2300px;height:2px;background:#e3e5ea"></div>
<div class="a" style="left:578px;top:998px;width:32px;height:32px;border:2px solid #c6c6c6;border-radius:5px;background:#fff"></div>
<svg style="left:640px;top:976px" width="63" height="72" viewBox="0 0 63 72"><path d="M6 0 H41.5 L63 23.5 V66 Q63 72 57 72 H6 Q0 72 0 66 V6 Q0 0 6 0 Z" fill="#12a2f0"/><path d="M41.5 0 L63 23.5 H47.5 Q41.5 23.5 41.5 17.5 Z" fill="#76d0f7"/></svg>
<div class="t" style="left:640px;top:1018px;width:63px;text-align:center;font-size:20px;font-weight:700;color:#fff;letter-spacing:-0.6px">RVT</div>
<div class="t" style="left:736px;top:1002px;font-size:24px;color:#333;font-weight:400;letter-spacing:0.33px">rac_advanced_sample_project.rvt</div>
<div class="t" style="left:2049px;top:1001px;font-size:24px;color:#999;font-weight:400;">邵光信</div>
<div class="t" style="left:2328px;top:1001px;font-size:24px;color:#999;font-weight:400;">v7</div>
<div class="t" style="left:2408px;top:1001px;font-size:24px;color:#999;font-weight:400;">13.43 MB</div>
<div class="t" style="left:2577px;top:1001px;font-size:24px;color:#999;font-weight:400;letter-spacing:0.3px">2018–11–28 18:38</div>
<div class="a" style="left:530px;top:1070px;width:2300px;height:2px;background:#e3e5ea"></div>
<div class="a" style="left:578px;top:1114px;width:32px;height:32px;border:2px solid #c6c6c6;border-radius:5px;background:#fff"></div>
<svg style="left:640px;top:1092px" width="63" height="72" viewBox="0 0 63 72"><path d="M6 0 H41.5 L63 23.5 V66 Q63 72 57 72 H6 Q0 72 0 66 V6 Q0 0 6 0 Z" fill="#12a2f0"/><path d="M41.5 0 L63 23.5 H47.5 Q41.5 23.5 41.5 17.5 Z" fill="#76d0f7"/></svg>
<div class="t" style="left:640px;top:1134px;width:63px;text-align:center;font-size:20px;font-weight:700;color:#fff;letter-spacing:-0.6px">RVT</div>
<div class="t" style="left:736px;top:1118px;font-size:24px;color:#333;font-weight:400;letter-spacing:0.3px">rme_advanced_sample_project.rvt</div>
<div class="t" style="left:2049px;top:1117px;font-size:24px;color:#999;font-weight:400;">邵光信</div>
<div class="t" style="left:2328px;top:1117px;font-size:24px;color:#999;font-weight:400;">v4</div>
<div class="t" style="left:2408px;top:1117px;font-size:24px;color:#999;font-weight:400;">30.57 MB</div>
<div class="t" style="left:2577px;top:1117px;font-size:24px;color:#999;font-weight:400;letter-spacing:0.3px">2018–11–28 18:38</div>
<div class="a" style="left:530px;top:1186px;width:2300px;height:2px;background:#e3e5ea"></div>
<div class="a" style="left:578px;top:1230px;width:32px;height:32px;border:2px solid #c6c6c6;border-radius:5px;background:#fff"></div>
<svg style="left:640px;top:1208px" width="63" height="72" viewBox="0 0 63 72"><path d="M6 0 H41.5 L63 23.5 V66 Q63 72 57 72 H6 Q0 72 0 66 V6 Q0 0 6 0 Z" fill="#12a2f0"/><path d="M41.5 0 L63 23.5 H47.5 Q41.5 23.5 41.5 17.5 Z" fill="#76d0f7"/></svg>
<div class="t" style="left:640px;top:1250px;width:63px;text-align:center;font-size:20px;font-weight:700;color:#fff;letter-spacing:-0.6px">RVT</div>
<div class="t" style="left:736px;top:1234px;font-size:24px;color:#333;font-weight:400;letter-spacing:0.35px">rst_advanced_sample_project.rvt</div>
<div class="t" style="left:2049px;top:1233px;font-size:24px;color:#999;font-weight:400;">邵光信</div>
<div class="t" style="left:2328px;top:1233px;font-size:24px;color:#999;font-weight:400;">v3</div>
<div class="t" style="left:2408px;top:1233px;font-size:24px;color:#999;font-weight:400;">11.28 MB</div>
<div class="t" style="left:2577px;top:1233px;font-size:24px;color:#999;font-weight:400;letter-spacing:0.3px">2018–11–28 18:39</div>
<div class="a" style="left:530px;top:1302px;width:2300px;height:2px;background:#e3e5ea"></div>
<div class="a" style="left:578px;top:1346px;width:32px;height:32px;border:2px solid #c6c6c6;border-radius:5px;background:#fff"></div>
<svg style="left:640px;top:1324px" width="63" height="72" viewBox="0 0 63 72"><path d="M6 0 H41.5 L63 23.5 V66 Q63 72 57 72 H6 Q0 72 0 66 V6 Q0 0 6 0 Z" fill="#12a2f0"/><path d="M41.5 0 L63 23.5 H47.5 Q41.5 23.5 41.5 17.5 Z" fill="#76d0f7"/></svg>
<div class="t" style="left:640px;top:1366px;width:63px;text-align:center;font-size:20px;font-weight:700;color:#fff;letter-spacing:-0.6px">RVT</div>
<div class="t" style="left:736px;top:1350px;font-size:24px;color:#333;font-weight:400;">土建0831版图纸.rvt</div>
<div class="t" style="left:2049px;top:1349px;font-size:24px;color:#999;font-weight:400;">sweet67</div>
<div class="t" style="left:2328px;top:1349px;font-size:24px;color:#999;font-weight:400;">v1</div>
<div class="t" style="left:2408px;top:1349px;font-size:24px;color:#999;font-weight:400;">138.62 MB</div>
<div class="t" style="left:2577px;top:1349px;font-size:24px;color:#999;font-weight:400;letter-spacing:0.3px">2018–11–29 15:09</div>
<div class="a" style="left:530px;top:1418px;width:2300px;height:2px;background:#e3e5ea"></div>
<div class="a" style="left:578px;top:1462px;width:32px;height:32px;border:2px solid #c6c6c6;border-radius:5px;background:#fff"></div>
<svg style="left:640px;top:1440px" width="63" height="72" viewBox="0 0 63 72"><path d="M6 0 H41.5 L63 23.5 V66 Q63 72 57 72 H6 Q0 72 0 66 V6 Q0 0 6 0 Z" fill="#1173c9"/><path d="M41.5 0 L63 23.5 H47.5 Q41.5 23.5 41.5 17.5 Z" fill="#7ab6e0"/></svg>
<div class="t" style="left:640px;top:1482px;width:63px;text-align:center;font-size:20px;font-weight:700;color:#fff;letter-spacing:-1.4px">DWG</div>
<div class="t" style="left:736px;top:1441px;font-size:24px;color:#333;font-weight:400;letter-spacing:0.2px">有关联图纸–Revit示例模型–1–楼层平面 – 01 f.dwg</div>
<div class="a" style="left:736px;top:1482px;display:flex;gap:21px"><div style="position:relative;height:36px;padding:0 14px 0 30px;border:2px solid #e1e4ec;border-radius:8px;background:#fff;font-size:24px;line-height:36px;color:#666;white-space:nowrap;-webkit-text-stroke:0.35px currentColor"><span style="position:absolute;left:10px;top:10px;width:12px;height:12px;border-radius:6px;background:#fdab5f"></span>二三维联动</div></div>
<div class="t" style="left:2049px;top:1465px;font-size:24px;color:#999;font-weight:400;">任荣姣</div>
<div class="t" style="left:2328px;top:1465px;font-size:24px;color:#999;font-weight:400;">v1</div>
<div class="t" style="left:2408px;top:1465px;font-size:24px;color:#999;font-weight:400;">177.20 kB</div>
<div class="t" style="left:2577px;top:1465px;font-size:24px;color:#999;font-weight:400;letter-spacing:0.3px">2021–07–29 15:21</div>
<div class="a" style="left:530px;top:1534px;width:2300px;height:2px;background:#e3e5ea"></div>
<div class="a" style="left:578px;top:1578px;width:32px;height:32px;border:2px solid #c6c6c6;border-radius:5px;background:#fff"></div>
<svg style="left:640px;top:1556px" width="63" height="72" viewBox="0 0 63 72"><path d="M6 0 H41.5 L63 23.5 V66 Q63 72 57 72 H6 Q0 72 0 66 V6 Q0 0 6 0 Z" fill="#12a2f0"/><path d="M41.5 0 L63 23.5 H47.5 Q41.5 23.5 41.5 17.5 Z" fill="#76d0f7"/></svg>
<div class="t" style="left:640px;top:1598px;width:63px;text-align:center;font-size:20px;font-weight:700;color:#fff;letter-spacing:-0.6px">RVT</div>
<div class="t" style="left:736px;top:1557px;font-size:24px;color:#333;font-weight:400;">有关联图纸–Revit示例模型–1.rvt</div>
<div class="a" style="left:736px;top:1598px;display:flex;gap:21px"><div style="position:relative;height:36px;padding:0 14px 0 30px;border:2px solid #e1e4ec;border-radius:8px;background:#fff;font-size:24px;line-height:36px;color:#666;white-space:nowrap;-webkit-text-stroke:0.35px currentColor"><span style="position:absolute;left:10px;top:10px;width:12px;height:12px;border-radius:6px;background:#5aaef5"></span>路径漫游</div><div style="position:relative;height:36px;padding:0 14px 0 30px;border:2px solid #e1e4ec;border-radius:8px;background:#fff;font-size:24px;line-height:36px;color:#666;white-space:nowrap;-webkit-text-stroke:0.35px currentColor"><span style="position:absolute;left:10px;top:10px;width:12px;height:12px;border-radius:6px;background:#9bd273"></span>批注</div><div style="position:relative;height:36px;padding:0 14px 0 30px;border:2px solid #e1e4ec;border-radius:8px;background:#fff;font-size:24px;line-height:36px;color:#666;white-space:nowrap;-webkit-text-stroke:0.35px currentColor"><span style="position:absolute;left:10px;top:10px;width:12px;height:12px;border-radius:6px;background:#fdab5f"></span>二三维联动</div></div>
<div class="t" style="left:2049px;top:1581px;font-size:24px;color:#999;font-weight:400;">邵光信</div>
<div class="t" style="left:2328px;top:1581px;font-size:24px;color:#999;font-weight:400;">v1</div>
<div class="t" style="left:2408px;top:1581px;font-size:24px;color:#999;font-weight:400;">12.11 MB</div>
<div class="t" style="left:2577px;top:1581px;font-size:24px;color:#999;font-weight:400;letter-spacing:0.3px">2018–11–28 18:31</div>
<div class="a" style="left:530px;top:1648px;width:2300px;height:2px;background:#e3e5ea"></div>
</body></html>
